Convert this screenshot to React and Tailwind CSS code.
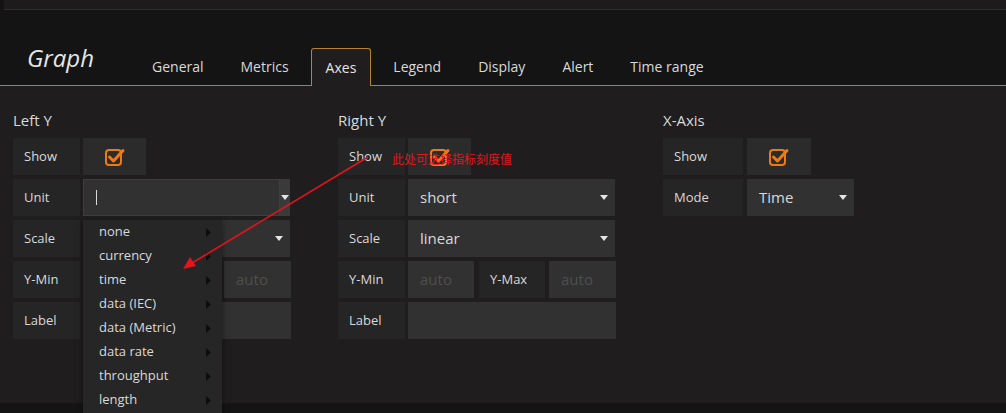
import React from 'react';

const font = { fontFamily: '"Open Sans", "Liberation Sans", sans-serif' };

const Caret = () => (
  <svg width="8" height="5" viewBox="0 0 8 5" className="shrink-0">
    <path d="M0 0 L8 0 L4 5 Z" fill="#e4e4e4" />
  </svg>
);

const Check = () => (
  <svg width="22" height="20" viewBox="0 0 22 20">
    <rect x="2" y="3" width="15" height="15" rx="3" fill="none" stroke="#eb7b18" strokeWidth="2" />
    <path d="M5.5 10 L9.5 14 L19 3.5" fill="none" stroke="#eb7b18" strokeWidth="3" strokeLinecap="round" strokeLinejoin="round" />
  </svg>
);

const Label = ({ children, w = 'w-[67px]' }) => (
  <div className={`${w} h-[37px] shrink-0 bg-[#252525] flex items-center pl-[11px] text-[13px] text-[#d8d9da]`}>
    {children}
  </div>
);

const CheckBox = ({ w = 'w-[63px]' }) => (
  <div className={`${w} h-[37px] bg-[#2b2b2b] flex items-center justify-center`}>
    <Check />
  </div>
);

const Select = ({ value, w = 'w-[207px]' }) => (
  <div className={`${w} h-[37px] bg-[#313131] flex items-center justify-between pl-[12px] pr-[7px] text-[15px] text-[#d8d9da]`}>
    <span>{value}</span>
    <Caret />
  </div>
);

const Input = ({ placeholder, w }) => (
  <div className={`${w} h-[37px] bg-[#313131] flex items-center pl-[12px] text-[15px] text-[#4e4e4e]`}>
    {placeholder}
  </div>
);

const menuItems = ['none', 'currency', 'time', 'data (IEC)', 'data (Metric)', 'data rate', 'throughput', 'length'];

// column for one Y axis; the left one has the unit picker open over its rows
const AxisColumn = ({ title, unit, scale, focused }) => (
  <div className="w-[325px] shrink-0">
    <div className="h-[20px] leading-[20px] text-[15px] text-[#d8d9da] mb-[8px]">{title}</div>
    <div className="flex flex-col gap-[4px]">
      <div className="flex gap-[3px]">
        <Label>Show</Label>
        <CheckBox />
      </div>
      <div className="flex gap-[3px]">
        <Label>Unit</Label>
        {focused ? (
          <div className="relative flex">
            <div className="w-[197px] h-[37px] bg-[#313131] border border-[#2c4258] flex items-center pl-[12px]">
              <div className="w-px h-[15px] bg-[#d8d9da]" />
            </div>
            <div className="w-[10px] h-[37px] bg-[#3a3a3a] flex items-center justify-center">
              <Caret />
            </div>
            <div className="absolute left-0 top-[41px] w-[139px] bg-[#262626] shadow-[0_2px_6px_rgba(0,0,0,0.5)] z-10 pb-[10px]">
              {menuItems.map((m) => (
                <div key={m} className="h-[24px] flex items-center justify-between pl-[16px] pr-[11px] text-[13px] text-[#d8d9da]">
                  <span>{m}</span>
                  <svg width="5" height="9" viewBox="0 0 5 9">
                    <path d="M0 0 L5 4.5 L0 9 Z" fill="#0d0d0d" />
                  </svg>
                </div>
              ))}
            </div>
          </div>
        ) : (
          <Select value={unit} />
        )}
      </div>
      <div className="flex gap-[3px]">
        <Label>Scale</Label>
        <Select value={scale} />
      </div>
      <div className="flex gap-[3px]">
        <Label>Y-Min</Label>
        <Input placeholder={focused ? '' : 'auto'} w="w-[66px]" />
        <div className="ml-[2px]">
          <Label w="w-[66px]">{focused ? '' : 'Y-Max'}</Label>
        </div>
        <div className="ml-[1px]">
          <Input placeholder="auto" w="w-[67px]" />
        </div>
      </div>
      <div className="flex gap-[3px]">
        <Label>Label</Label>
        <Input placeholder="" w="w-[208px]" />
      </div>
    </div>
  </div>
);

const tabs = ['General', 'Metrics', 'Axes', 'Legend', 'Display', 'Alert', 'Time range'];

export default function App() {
  return (
    <div className="w-[1006px] h-[413px] bg-[#141414] overflow-hidden relative flex flex-col" style={font}>
      {/* top strip */}
      <div className="ml-[4px] h-[10px] bg-[#1d1b1c] border-b border-[#2e2e2e] shrink-0" />

      {/* header with tabs */}
      <div className="h-[76px] shrink-0 flex items-end border-b border-[#c07a2a]">
        <div className="w-[137px] pl-[27px] self-center mt-[20px] text-[24px] italic text-[#e6e6e6]">Graph</div>
        <div className="flex gap-[7px]">
          {tabs.map((t) =>
            t === 'Axes' ? (
              <div key={t} className="h-[38px] -mb-px px-[14px] flex items-center text-[14px] text-[#e6e6e6] bg-[#1f1d1e] border border-b-0 border-[#b58234] rounded-t-[3px]">
                {t}
              </div>
            ) : (
              <div key={t} className="h-[37px] px-[15px] flex items-center text-[14px] text-[#d8d9da]">
                {t}
              </div>
            )
          )}
        </div>
      </div>

      {/* editor body */}
      <div className="h-[317px] shrink-0 bg-[#1f1d1e] pt-[24px] pl-[13px] flex">
        <AxisColumn title="Left Y" unit="" scale="" focused />
        <AxisColumn title="Right Y" unit="short" scale="linear" />
        <div className="w-[325px]">
          <div className="h-[20px] leading-[20px] text-[15px] text-[#d8d9da] mb-[8px]">X-Axis</div>
          <div className="flex flex-col gap-[4px]">
            <div className="flex gap-[4px]">
              <Label w="w-[80px]">Show</Label>
              <CheckBox w="w-[64px]" />
            </div>
            <div className="flex gap-[4px]">
              <Label w="w-[80px]">Mode</Label>
              <Select value="Time" w="w-[107px]" />
            </div>
          </div>
        </div>
      </div>
      <div className="flex-1 bg-[#141414]" />

      {/* red annotation */}
      <svg className="absolute left-0 top-0 pointer-events-none z-20" width="1006" height="413">
        <line x1="368" y1="157" x2="192" y2="263" stroke="#e3141a" strokeWidth="1.6" />
        <path d="M183 269 L190 257 L196 266 Z" fill="#e3141a" />
      </svg>
      <div
        className="absolute left-[392px] top-[151px] text-[12px] leading-[16px] text-[#e3141a] z-20"
        style={{ fontFamily: '"Noto Sans CJK SC", sans-serif' }}
      >
        此处可选择指标刻度值
      </div>
    </div>
  );
}
